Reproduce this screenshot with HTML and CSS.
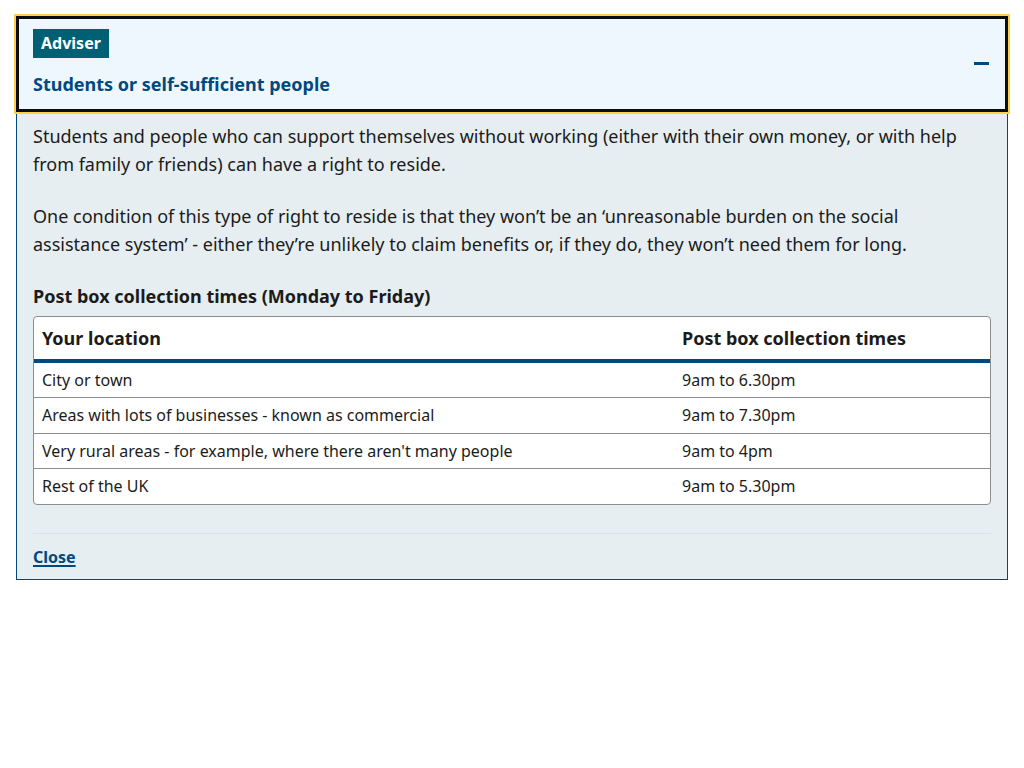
FILE: index.html
```html
<!DOCTYPE html>
<html lang="en">
<head>
<meta charset="utf-8">
<title>Students or self-sufficient people</title>
<link rel="stylesheet" href="styles.css">
</head>
<body>
<div class="accordion">
  <div class="acc-header">
    <div class="acc-heading">
      <span class="badge">Adviser</span>
      <h2 class="acc-title">Students or self-sufficient people</h2>
    </div>
    <span class="minus" aria-hidden="true"></span>
  </div>
  <div class="acc-body">
    <p>Students and people who can support themselves without working (either with their own money, or with help from family or friends) can have a right to reside.</p>
    <p>One condition of this type of right to reside is that they won’t be an ‘unreasonable burden on the social assistance system’ - either they’re unlikely to claim benefits or, if they do, they won’t need them for long.</p>
    <div class="caption">Post box collection times (Monday to Friday)</div>
    <div class="table-wrap">
      <table class="times">
        <thead>
          <tr><th class="col-loc">Your location</th><th>Post box collection times</th></tr>
        </thead>
        <tbody>
          <tr><td>City or town</td><td>9am to 6.30pm</td></tr>
          <tr><td>Areas with lots of businesses - known as commercial</td><td>9am to 7.30pm</td></tr>
          <tr><td>Very rural areas - for example, where there aren't many people</td><td>9am to 4pm</td></tr>
          <tr><td>Rest of the UK</td><td>9am to 5.30pm</td></tr>
        </tbody>
      </table>
    </div>
    <div class="acc-footer">
      <a href="#" class="close-link">Close</a>
    </div>
  </div>
</div>
</body>
</html>
```

FILE: styles.css
```css
html, body {
  margin: 0;
  padding: 0;
  background: #ffffff;
}
body {
  padding: 16px;
  font-family: "Noto Sans", "Open Sans", sans-serif;
  color: #1b1b1b;
}
.accordion {
  border: 1px solid #00497f;
  background: #e6eef1;
}
.acc-header {
  margin: -1px -1px 0;
  border: 3px solid #0b0c0c;
  outline: 2px solid #ffd04a;
  background: #eff7fe;
  padding: 10px 16px 12px 14px;
  display: flex;
  align-items: center;
  justify-content: space-between;
}
.acc-heading {
  display: flex;
  flex-direction: column;
  align-items: flex-start;
}
.badge {
  background: #006073;
  color: #ffffff;
  font-weight: 700;
  font-size: 16px;
  line-height: 25px;
  padding: 2px 8px;
}
.acc-title {
  margin: 13px 0 0;
  font-size: 18px;
  line-height: 26px;
  font-weight: 700;
  color: #00497f;
}
.minus {
  width: 15px;
  height: 3px;
  background: #00497f;
  margin-top: 1px;
}
.acc-body {
  padding: 10px 16px 10px 16px;
}
.acc-body p {
  margin: 0 0 24px;
  padding-right: 10px;
  font-size: 18px;
  line-height: 28px;
}
.caption {
  font-weight: 700;
  font-size: 18px;
  line-height: 28px;
  margin-bottom: 6px;
}
.table-wrap {
  border: 1px solid #8e8e8e;
  border-radius: 4px;
  background: #ffffff;
  overflow: hidden;
}
.times {
  width: 100%;
  border-collapse: collapse;
  font-size: 16px;
}
.times th {
  text-align: left;
  font-size: 18px;
  font-weight: 700;
  line-height: 26px;
  padding: 8px 8px;
  border-bottom: 4px solid #00497f;
}
.times .col-loc {
  width: 624px;
}
.times td {
  line-height: 24.4px;
  padding: 5px 8px;
  border-top: 1px solid #8e8e8e;
}
.times tbody tr:first-child td {
  border-top: none;
}
.acc-footer {
  margin-top: 28px;
  border-top: 1px solid #dae3e7;
  padding-top: 11px;
}
.close-link {
  font-weight: 700;
  font-size: 16px;
  line-height: 24px;
  color: #00497f;
  text-decoration: underline;
  text-decoration-thickness: 2px;
  text-underline-offset: 2px;
}
```
